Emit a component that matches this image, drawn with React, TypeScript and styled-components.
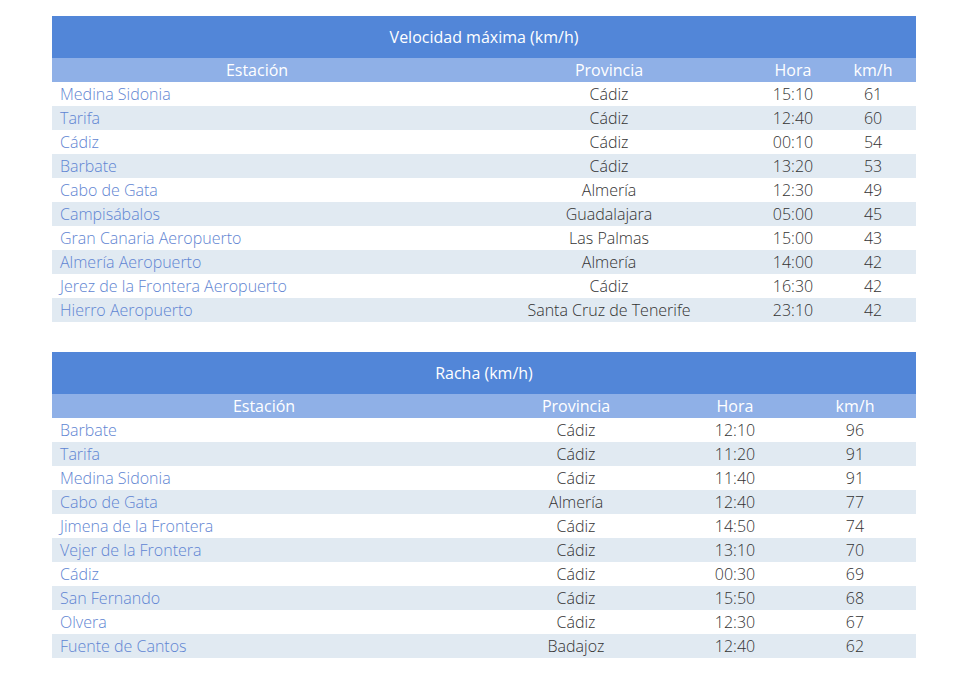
import React from "react";
import styled, { createGlobalStyle } from "styled-components";

const Global = createGlobalStyle`
  html, body { margin: 0; padding: 0; background: #ffffff; }
  body { font-family: "Open Sans", "Liberation Sans", sans-serif; }
`;

const Page = styled.div`
  display: flex;
  flex-direction: column;
  gap: 30px;
  padding: 16px 0 0 52px;
  width: 864px;
`;

const Table = styled.table`
  width: 864px;
  border-collapse: collapse;
  border-spacing: 0;
  table-layout: fixed;
  font-family: "Open Sans", "Liberation Sans", sans-serif;
`;

const Caption = styled.th`
  height: 42px;
  padding: 0;
  background: #5286d8;
  color: #ffffff;
  font-size: 16px;
  font-weight: 400;
  text-align: center;
`;

const HeadCell = styled.th`
  height: 24px;
  padding: 0;
  background: #8fb0e7;
  color: #ffffff;
  font-size: 16px;
  font-weight: 400;
  text-align: center;
  line-height: 24px;
`;

const Row = styled.tr<{ $alt: boolean }>`
  background: ${(p) => (p.$alt ? "#e1eaf2" : "#ffffff")};
`;

const Cell = styled.td<{ $station?: boolean }>`
  height: 24px;
  padding: ${(p) => (p.$station ? "0 0 0 8px" : "0")};
  line-height: 24px;
  font-size: 16px;
  font-weight: 300;
  color: ${(p) => (p.$station ? "#5f85d2" : "#333333")};
  text-align: ${(p) => (p.$station ? "left" : "center")};
  white-space: nowrap;
`;

type Item = [string, string, string, string];

const vel: Item[] = [
  ["Medina Sidonia", "Cádiz", "15:10", "61"],
  ["Tarifa", "Cádiz", "12:40", "60"],
  ["Cádiz", "Cádiz", "00:10", "54"],
  ["Barbate", "Cádiz", "13:20", "53"],
  ["Cabo de Gata", "Almería", "12:30", "49"],
  ["Campisábalos", "Guadalajara", "05:00", "45"],
  ["Gran Canaria Aeropuerto", "Las Palmas", "15:00", "43"],
  ["Almería Aeropuerto", "Almería", "14:00", "42"],
  ["Jerez de la Frontera Aeropuerto", "Cádiz", "16:30", "42"],
  ["Hierro Aeropuerto", "Santa Cruz de Tenerife", "23:10", "42"],
];

const racha: Item[] = [
  ["Barbate", "Cádiz", "12:10", "96"],
  ["Tarifa", "Cádiz", "11:20", "91"],
  ["Medina Sidonia", "Cádiz", "11:40", "91"],
  ["Cabo de Gata", "Almería", "12:40", "77"],
  ["Jimena de la Frontera", "Cádiz", "14:50", "74"],
  ["Vejer de la Frontera", "Cádiz", "13:10", "70"],
  ["Cádiz", "Cádiz", "00:30", "69"],
  ["San Fernando", "Cádiz", "15:50", "68"],
  ["Olvera", "Cádiz", "12:30", "67"],
  ["Fuente de Cantos", "Badajoz", "12:40", "62"],
];

function DataTable({ title, cols, rows }: { title: string; cols: number[]; rows: Item[] }) {
  return (
    <Table>
      <colgroup>
        {cols.map((w, i) => (
          <col key={i} style={{ width: w }} />
        ))}
      </colgroup>
      <thead>
        <tr>
          <Caption colSpan={4}>{title}</Caption>
        </tr>
        <tr>
          <HeadCell>Estación</HeadCell>
          <HeadCell>Provincia</HeadCell>
          <HeadCell>Hora</HeadCell>
          <HeadCell>km/h</HeadCell>
        </tr>
      </thead>
      <tbody>
        {rows.map((r, i) => (
          <Row key={i} $alt={i % 2 === 1}>
            <Cell $station>{r[0]}</Cell>
            <Cell>{r[1]}</Cell>
            <Cell>{r[2]}</Cell>
            <Cell>{r[3]}</Cell>
          </Row>
        ))}
      </tbody>
    </Table>
  );
}

export default function App() {
  return (
    <>
      <Global />
      <Page>
        <DataTable title="Velocidad máxima (km/h)" cols={[410, 294, 74, 86]} rows={vel} />
        <DataTable title="Racha (km/h)" cols={[424, 200, 118, 122]} rows={racha} />
      </Page>
    </>
  );
}
